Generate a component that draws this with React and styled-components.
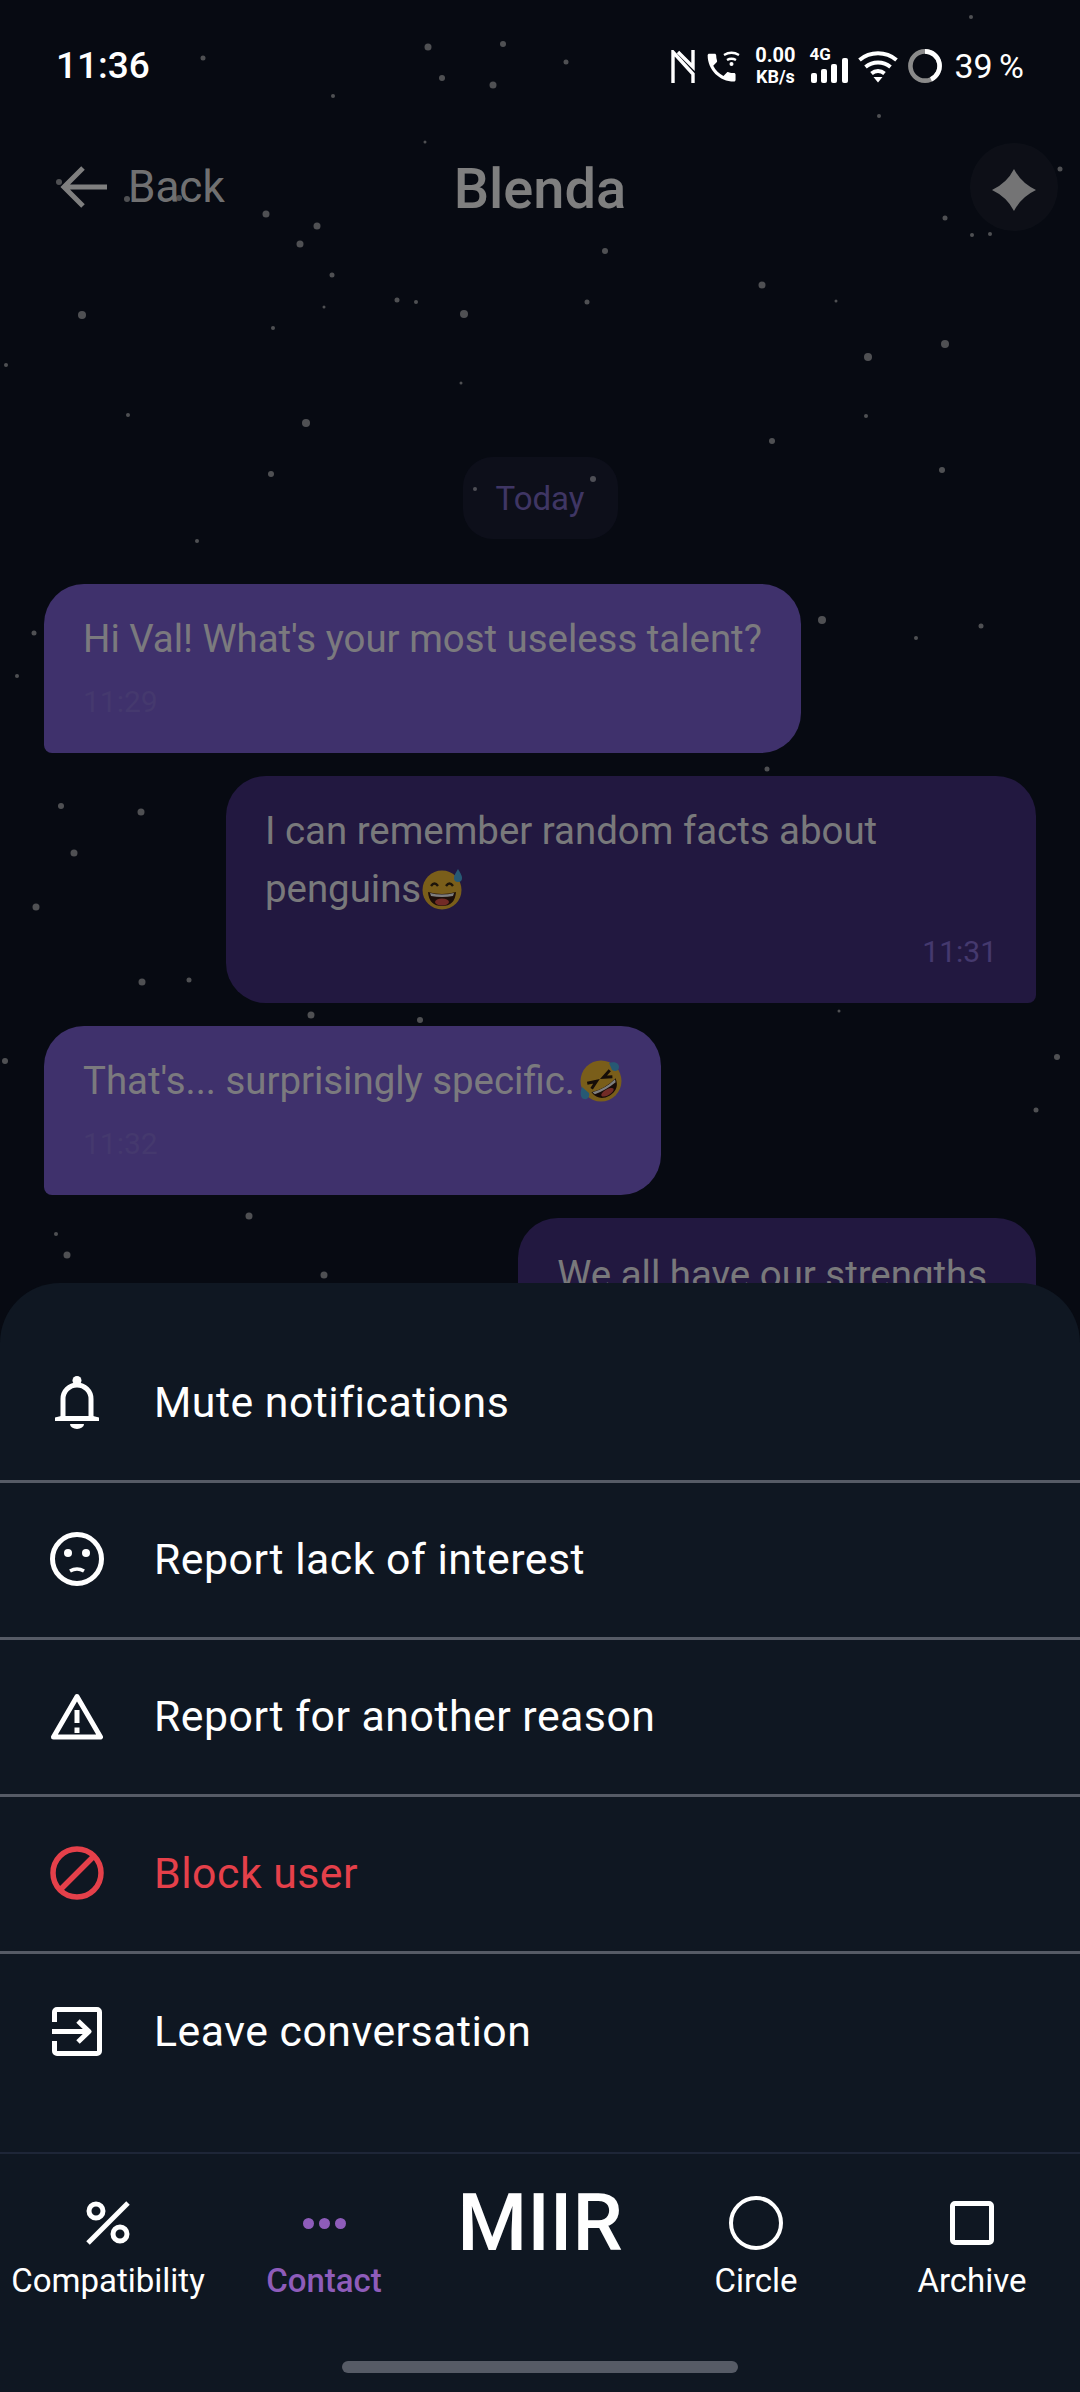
import React from 'react';
import styled, { createGlobalStyle } from 'styled-components';

const GlobalStyle = createGlobalStyle`
  html, body {
    margin: 0;
    padding: 0;
    background: #0e1424;
  }
  * { box-sizing: border-box; }
`;

// Background stars, measured off the screen: x, y, radius
const STARS = [
  [971, 17, 2], [428, 47, 3.5], [503, 44, 3], [203, 58, 2.5], [566, 62, 2.5], [442, 78, 3], [493, 85, 3.5],
  [333, 96, 2], [879, 116, 2], [425, 142, 1.5], [59, 182, 3], [127, 199, 3], [179, 198, 3], [266, 214, 3.5],
  [317, 226, 3.5], [1060, 169, 2.5], [945, 218, 2.5], [972, 235, 2], [990, 234, 2], [300, 244, 3.5],
  [605, 251, 3], [332, 275, 2.5], [762, 285, 3.5], [82, 315, 4], [324, 307, 1.5], [397, 300, 2.5],
  [416, 302, 2], [464, 314, 4], [273, 328, 2], [6, 365, 2], [461, 383, 1.5], [128, 415, 2], [306, 423, 4],
  [587, 302, 2.5], [836, 301, 1.5], [945, 344, 4], [868, 357, 4], [866, 416, 2], [772, 441, 3],
  [271, 474, 3], [942, 470, 3], [593, 479, 3], [475, 489, 2], [197, 541, 2], [822, 620, 4], [981, 626, 2.5],
  [916, 638, 2], [34, 633, 2.5], [17, 676, 2], [767, 769, 2.5], [61, 806, 3], [141, 812, 3.5], [74, 853, 3.5],
  [36, 907, 3.5], [142, 982, 3.5], [189, 980, 2.5], [311, 1015, 3.5], [420, 1020, 3], [839, 1011, 1.5],
  [5, 1061, 3], [1057, 1057, 3], [1036, 1110, 2.5], [249, 1216, 3.5], [56, 1234, 2], [67, 1255, 3.5], [324, 1275, 3.5],
];

const Screen = styled.div`
  position: relative;
  width: 1080px;
  height: 2392px;
  overflow: hidden;
  background: #0e1424;
  font-family: Roboto, "Liberation Sans", sans-serif;
  color: #fff;
`;

const StarField = styled.svg`
  position: absolute;
  inset: 0;
`;

const Chat = styled.div`
  position: relative;
`;

const StatusBar = styled.div`
  position: relative;
  z-index: 3;
  height: 143px;
  padding: 48px 56px 0;
  display: flex;
  justify-content: space-between;
  align-items: flex-start;
`;

const Clock = styled.span`
  font-size: 37px;
  font-weight: 500;
  line-height: 36px;
`;

const StatusIcons = styled.div`
  display: flex;
  align-items: center;
  height: 36px;
`;

const NetSpeed = styled.div`
  width: 40px;
  margin: 0 14px 0 15px;
  display: flex;
  flex-direction: column;
  align-items: center;
  font-weight: 700;
  font-size: 20px;
  line-height: 21px;
`;

const NetUnit = styled.span`
  font-size: 18px;
`;

const Signal = styled.div`
  position: relative;
  width: 40px;
  height: 36px;
  margin-right: 9px;
`;

const SignalLabel = styled.span`
  position: absolute;
  left: 0;
  top: -3px;
  font-size: 17px;
  line-height: 18px;
  font-weight: 700;
`;

const Battery = styled.span`
  margin-left: 12px;
  font-size: 34px;
  line-height: 36px;
  word-spacing: -2px;
`;

const Header = styled.header`
  height: 88px;
  padding: 0 22px;
  display: grid;
  grid-template-columns: 1fr auto 1fr;
  align-items: center;
`;

const BackLink = styled.div`
  margin-left: 38px;
  display: flex;
  align-items: center;
  gap: 21px;
  font-size: 44px;
  color: rgba(255, 255, 255, 0.9);
`;

const Title = styled.h1`
  margin: 4px 0 0;
  font-size: 56px;
  font-weight: 500;
`;

const SparkleButton = styled.div`
  justify-self: end;
  width: 88px;
  height: 88px;
  border-radius: 50%;
  background: rgba(255, 255, 255, 0.05);
  display: flex;
  align-items: center;
  justify-content: center;
  padding-top: 6px;
`;

const Messages = styled.div`
  padding: 226px 44px 0;
  display: flex;
  flex-direction: column;
  gap: 23px;
`;

const DayPill = styled.div`
  align-self: center;
  width: 155px;
  height: 82px;
  margin-bottom: 22px;
  border-radius: 30px;
  background: rgba(150, 130, 230, 0.09);
  display: flex;
  align-items: center;
  justify-content: center;
  font-size: 33px;
  color: #7f6cc8;
`;

const Bubble = styled.div`
  align-self: ${({ $sent }) => ($sent ? 'flex-end' : 'flex-start')};
  max-width: 810px;
  padding: 26px 39px 31px;
  background: ${({ $sent }) => ($sent ? '#443080' : '#7e62d8')};
  border-radius: ${({ $sent }) => ($sent ? '40px 40px 8px 40px' : '40px 40px 40px 8px')};
`;

const BubbleText = styled.div`
  margin: ${({ $tail }) => ($tail ? '2px 10px 0 0' : 0)};
  font-size: 38.4px;
  line-height: 58px;
  color: rgba(255, 255, 255, 0.95);
`;

const BubbleTime = styled.div`
  margin-top: 14px;
  font-size: 30px;
  line-height: 40px;
  color: #8a72dc;
  text-align: ${({ $sent }) => ($sent ? 'right' : 'left')};
`;

const Scrim = styled.div`
  position: absolute;
  inset: 0;
  z-index: 1;
  background: rgba(0, 0, 0, 0.5);
`;

const Sheet = styled.div`
  position: absolute;
  left: 0;
  right: 0;
  bottom: 0;
  z-index: 2;
  height: 1109px;
  padding-top: 43px;
  display: flex;
  flex-direction: column;
  background: #0f1722;
  border-radius: 60px 60px 0 0;
`;

const Menu = styled.div`
  height: 826px;
`;

const MenuRow = styled.div`
  height: 157px;
  padding-left: 50px;
  display: flex;
  align-items: center;
  gap: 50px;
  border-bottom: 3px solid #565b66;
  color: ${({ $danger }) => ($danger ? '#e5404a' : '#fff')};
  &:last-child { border-bottom: none; }
`;

const MenuIcon = styled.div`
  width: 54px;
  margin-top: -2px;
  display: flex;
  justify-content: center;
`;

const MenuLabel = styled.span`
  margin-top: -3px;
  font-size: 42.8px;
  letter-spacing: 0.5px;
`;

const BottomNav = styled.nav`
  flex: 1;
  padding-top: 40px;
  display: grid;
  grid-template-columns: repeat(5, 216px);
  border-top: 2px solid #1e2638;
  align-items: start;
`;

const NavItem = styled.div`
  display: flex;
  flex-direction: column;
  align-items: center;
  gap: 9px;
  color: ${({ $active }) => ($active ? '#8e5cba' : '#fff')};
  font-weight: ${({ $active }) => ($active ? 500 : 400)};
`;

const NavIcon = styled.div`
  height: 58px;
  display: flex;
  align-items: center;
  justify-content: center;
`;

const NavLabel = styled.span`
  font-size: 33px;
  line-height: 40px;
`;

const Logo = styled.div`
  text-align: center;
  font-size: 80px;
  line-height: 78px;
  font-weight: 500;
  margin-top: -10px;
`;

const HomeBar = styled.div`
  align-self: center;
  width: 396px;
  height: 12px;
  margin-bottom: 19px;
  border-radius: 6px;
  background: #565b66;
`;

const ArchiveBox = styled.div`
  width: 44px;
  height: 44px;
  border: 5px solid #fff;
  border-radius: 5px;
`;

const CircleRing = styled.div`
  width: 54px;
  height: 54px;
  border: 4.5px solid #fff;
  border-radius: 50%;
`;

const Dot = styled.i`
  display: block;
  width: 11px;
  height: 11px;
  border-radius: 50%;
  background: #8e5cba;
`;

const DotRow = styled.div`
  display: flex;
  gap: 5px;
`;

const InlineEmoji = styled.svg`
  vertical-align: -8px;
  margin-left: ${({ $gap }) => $gap || 0}px;
`;

const NfcIcon = () => (
  <svg width="24" height="33" viewBox="0 0 24 33" fill="none" stroke="#fff" strokeWidth="3.4">
    <path d="M2 33V2l20 22v9M22 0v17L7 2" />
  </svg>
);

const CallIcon = () => (
  <svg width="34" height="34" viewBox="0 0 34 34" fill="#fff" style={{ marginLeft: 11 }}>
    <path transform="translate(-3 0) scale(1.55)" d="M6.62 10.79c1.44 2.83 3.76 5.14 6.59 6.59l2.2-2.2c.27-.27.67-.36 1.02-.24 1.12.37 2.33.57 3.57.57.55 0 1 .45 1 1V20c0 .55-.45 1-1 1-9.39 0-17-7.61-17-17 0-.55.45-1 1-1h3.5c.55 0 1 .45 1 1 0 1.25.2 2.45.57 3.57.11.35.03.74-.25 1.02l-2.2 2.2z" />
    <path d="M18 6a15 15 0 0 1 15 0M21 11a9 9 0 0 1 9 0" fill="none" stroke="#fff" strokeWidth="2.4" />
    <circle cx="25.5" cy="15" r="2" />
  </svg>
);

const SignalBars = () => (
  <svg width="38" height="25" viewBox="0 0 38 25" fill="#fff" style={{ position: 'absolute', left: 2, top: 10 }}>
    <rect x="0" y="15" width="6" height="10" rx="2" />
    <rect x="10" y="11" width="6" height="14" rx="2" />
    <rect x="20" y="6" width="6" height="19" rx="2" />
    <rect x="31" y="0" width="6" height="25" rx="2" />
  </svg>
);

const WifiIcon = () => (
  <svg width="40" height="33" viewBox="0 0 40 33" fill="none" stroke="#fff" strokeWidth="4">
    <path d="M1.5 10a29 29 0 0 1 37 0M7.5 17a20 20 0 0 1 25 0M13.5 23.5a10 10 0 0 1 13 0" />
    <path d="M15.5 27h9L20 32.5z" fill="#fff" stroke="none" />
  </svg>
);

const BatteryRing = () => (
  <svg width="34" height="34" viewBox="0 0 34 34" fill="none" strokeWidth="4.6" style={{ marginLeft: 10 }}>
    <circle cx="17" cy="17" r="14.6" stroke="#8a8a8a" />
    <path d="M17 2.4a14.6 14.6 0 0 1 6 27.9" stroke="#fff" />
  </svg>
);

const BackArrow = () => (
  <svg width="47" height="42" viewBox="0 0 47 42" fill="none" stroke="#fff" strokeWidth="5">
    <path d="M23 2 4 21l19 19M4 21h43" />
  </svg>
);

const Sparkle = () => (
  <svg width="44" height="42" viewBox="0 0 44 42" fill="rgba(255,255,255,0.9)">
    <path d="M22 0Q29 14 44 21Q29 28 22 42Q15 28 0 21Q15 14 22 0z" />
  </svg>
);

const SweatEmoji = () => (
  <InlineEmoji width="42" height="42" viewBox="0 0 42 42" $gap={1}>
    <circle cx="20" cy="22" r="19.5" fill="#f5bd35" />
    <path d="M9 18q3.5-5 7 0M24 18q3.5-5 7 0" fill="none" stroke="#3a2a14" strokeWidth="2.4" />
    <path d="M6 24q14 4 28 0-1 14-14 14T6 24z" fill="#3a1d12" />
    <path d="M8 25q12 3 24 0l-1 3q-11 2-22 0z" fill="#fff" />
    <ellipse cx="20" cy="34" rx="7" ry="3.5" fill="#e4574d" />
    <path d="M36 1c-3 5-4 7-4 9a4 4 0 0 0 8 0c0-2-1-4-4-9z" fill="#4fb3e8" />
  </InlineEmoji>
);

const RoflEmoji = () => (
  <InlineEmoji width="42" height="42" viewBox="0 0 42 42" $gap={5}>
    <circle cx="21" cy="21" r="20.5" fill="#f5bd35" />
    <g transform="rotate(-30 21 21)">
      <path d="M8 16l9 3-8 4M34 16l-9 3 8 4" fill="none" stroke="#2a1a10" strokeWidth="3" />
      <path d="M7 26q14 4 28 0-2 12-14 12T7 26z" fill="#2f1710" />
      <path d="M8 26.5q13 3.5 26 0l-1 3q-12 2-24 0z" fill="#fff" />
      <ellipse cx="21" cy="34" rx="7" ry="3" fill="#e4574d" />
    </g>
    <path d="M2 27c-2 5-2 11 2 12s6-3 5-6zM29 3c5-2 10 0 10 4s-4 5-7 3z" fill="#4fb3e8" />
  </InlineEmoji>
);

const BellIcon = () => (
  <svg width="44" height="53" viewBox="0 0 44 53" fill="none" stroke="currentColor" strokeWidth="5">
    <circle cx="22" cy="4.5" r="4.5" fill="currentColor" stroke="none" />
    <path d="M8 42V23a14 14 0 0 1 28 0v19" />
    <path d="M0 41.5 6 40h32l6 1.5V45H0z" fill="currentColor" stroke="none" />
    <path d="M15 48h14a7 5 0 0 1-14 0z" fill="currentColor" stroke="none" />
  </svg>
);

const SadIcon = () => (
  <svg width="54" height="54" viewBox="0 0 54 54" fill="none" stroke="currentColor" strokeWidth="5">
    <circle cx="27" cy="27" r="24.5" />
    <circle cx="18" cy="21" r="4" fill="currentColor" stroke="none" />
    <circle cx="36" cy="21" r="4" fill="currentColor" stroke="none" />
    <path d="M20 39q7-4 14 0" strokeWidth="3.6" />
  </svg>
);

const WarningIcon = () => (
  <svg width="52" height="47" viewBox="0 0 52 47" fill="none" stroke="currentColor" strokeWidth="5" strokeLinejoin="round">
    <path d="M26 3.5 49.5 44H2.5z" />
    <path d="M23.5 17h5v13h-5zM23.5 34.5h5v5.5h-5z" fill="currentColor" stroke="none" />
  </svg>
);

const BlockIcon = () => (
  <svg width="54" height="54" viewBox="0 0 54 54" fill="none" stroke="currentColor" strokeWidth="5.5">
    <circle cx="27" cy="27" r="24" />
    <path d="M10 44 44 10" />
  </svg>
);

const LeaveIcon = () => (
  <svg width="50" height="49" viewBox="0 0 50 49" fill="none" stroke="currentColor" strokeWidth="5" strokeLinejoin="round">
    <path d="M2.5 15V5a2.5 2.5 0 0 1 2.5-2.5h40A2.5 2.5 0 0 1 47.5 5v39a2.5 2.5 0 0 1-2.5 2.5H5A2.5 2.5 0 0 1 2.5 44V34" />
    <path d="M0 24.5h36M26 14l11 10.5L26 35" />
  </svg>
);

const PercentIcon = () => (
  <svg width="44" height="44" viewBox="0 0 44 44" fill="none" stroke="#fff" strokeWidth="5">
    <circle cx="10" cy="10" r="7" />
    <circle cx="34" cy="33" r="7" />
    <path d="M42 2 2 42" />
  </svg>
);

const MENU = [
  { label: 'Mute notifications', Icon: BellIcon },
  { label: 'Report lack of interest', Icon: SadIcon },
  { label: 'Report for another reason', Icon: WarningIcon },
  { label: 'Block user', Icon: BlockIcon, danger: true },
  { label: 'Leave conversation', Icon: LeaveIcon },
];

function App() {
  return (
    <Screen>
      <GlobalStyle />
      <StarField width="1080" height="2392">
        {STARS.map(([x, y, r]) => (
          <circle key={`${x}-${y}`} cx={x} cy={y} r={r} fill="#fff" fillOpacity="0.6" />
        ))}
      </StarField>

      <Chat>
        <StatusBar>
          <Clock>11:36</Clock>
          <StatusIcons>
            <NfcIcon />
            <CallIcon />
            <NetSpeed>
              <span>0.00</span>
              <NetUnit>KB/s</NetUnit>
            </NetSpeed>
            <Signal>
              <SignalLabel>4G</SignalLabel>
              <SignalBars />
            </Signal>
            <WifiIcon />
            <BatteryRing />
            <Battery>39 %</Battery>
          </StatusIcons>
        </StatusBar>

        <Header>
          <BackLink>
            <BackArrow />
            Back
          </BackLink>
          <Title>Blenda</Title>
          <SparkleButton>
            <Sparkle />
          </SparkleButton>
        </Header>

        <Messages>
          <DayPill>Today</DayPill>
          <Bubble>
            <BubbleText>Hi Val! What's your most useless talent?</BubbleText>
            <BubbleTime>11:29</BubbleTime>
          </Bubble>
          <Bubble $sent>
            <BubbleText>
              I can remember random facts about penguins
              <SweatEmoji />
            </BubbleText>
            <BubbleTime $sent>11:31</BubbleTime>
          </Bubble>
          <Bubble>
            <BubbleText>
              That's... surprisingly specific.
              <RoflEmoji />
            </BubbleText>
            <BubbleTime>11:32</BubbleTime>
          </Bubble>
          <Bubble $sent>
            <BubbleText $tail>We all have our strengths</BubbleText>
          </Bubble>
        </Messages>
      </Chat>

      <Scrim />

      <Sheet>
        <Menu>
          {MENU.map(({ label, Icon, danger }) => (
            <MenuRow key={label} $danger={danger}>
              <MenuIcon>
                <Icon />
              </MenuIcon>
              <MenuLabel>{label}</MenuLabel>
            </MenuRow>
          ))}
        </Menu>

        <BottomNav>
          <NavItem>
            <NavIcon>
              <PercentIcon />
            </NavIcon>
            <NavLabel>Compatibility</NavLabel>
          </NavItem>
          <NavItem $active>
            <NavIcon>
              <DotRow>
                <Dot />
                <Dot />
                <Dot />
              </DotRow>
            </NavIcon>
            <NavLabel>Contact</NavLabel>
          </NavItem>
          <Logo>MIIR</Logo>
          <NavItem>
            <NavIcon>
              <CircleRing />
            </NavIcon>
            <NavLabel>Circle</NavLabel>
          </NavItem>
          <NavItem>
            <NavIcon>
              <ArchiveBox />
            </NavIcon>
            <NavLabel>Archive</NavLabel>
          </NavItem>
        </BottomNav>
        <HomeBar />
      </Sheet>
    </Screen>
  );
}

export default App;
